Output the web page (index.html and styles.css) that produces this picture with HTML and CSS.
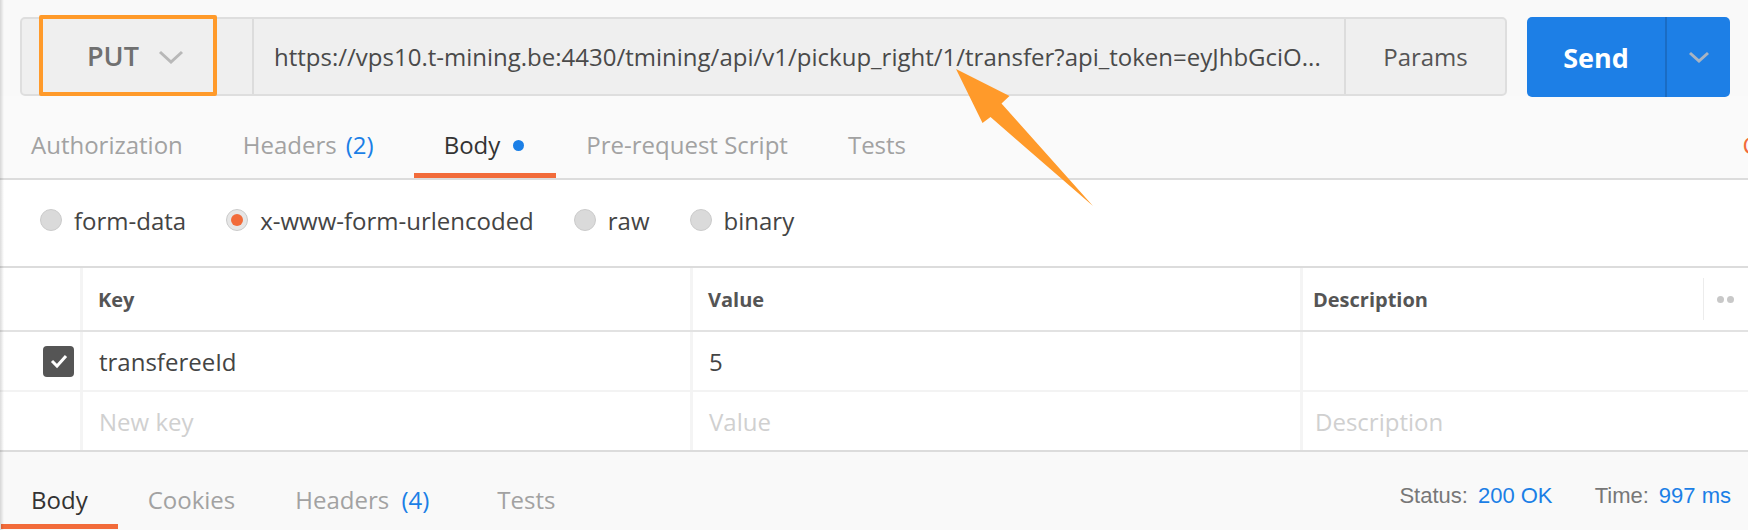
FILE: index.html
```html
<!DOCTYPE html>
<html>
<head>
<meta charset="utf-8">
<link rel="stylesheet" href="styles.css">
</head>
<body>
<div class="app">
  <div class="request-bar">
    <div class="url-group">
      <div class="method-cell">
        <div class="method-box">
          <span class="method-name">PUT</span>
          <svg class="chev" width="26" height="14" viewBox="0 0 26 14"><path d="M2 2 L13 12 L24 2" fill="none" stroke="#b8b8b8" stroke-width="3"/></svg>
        </div>
      </div>
      <div class="url-cell">https://vps10.t-mining.be:4430/tmining/api/v1/pickup_right/1/transfer?api_token=eyJhbGciO...</div>
      <div class="params-cell">Params</div>
    </div>
    <div class="send-group">
      <div class="send-btn">Send</div>
      <div class="send-drop">
        <svg width="22" height="12" viewBox="0 0 22 12"><path d="M2 2 L11 10 L20 2" fill="none" stroke="#a9b4c2" stroke-width="3"/></svg>
      </div>
    </div>
  </div>

  <div class="req-tabs">
    <div class="tab">Authorization</div>
    <div class="tab tab-headers">Headers <span class="count">(2)</span></div>
    <div class="tab active">Body <span class="dot"></span></div>
    <div class="tab">Pre-request Script</div>
    <div class="tab">Tests</div>
    <div class="tab-link">Cookies</div>
  </div>

  <div class="body-types">
    <div class="radio-item"><span class="radio"></span><span>form-data</span></div>
    <div class="radio-item"><span class="radio checked"></span><span>x-www-form-urlencoded</span></div>
    <div class="radio-item"><span class="radio"></span><span>raw</span></div>
    <div class="radio-item"><span class="radio"></span><span>binary</span></div>
  </div>

  <div class="kv">
    <div class="kv-row kv-head">
      <div class="cell c-check"></div>
      <div class="cell c-key">Key</div>
      <div class="cell c-val">Value</div>
      <div class="cell c-desc">
        <span class="desc-text">Description</span>
        <span class="more"><span class="mdot"></span><span class="mdot"></span></span>
      </div>
    </div>
    <div class="kv-row kv-item">
      <div class="cell c-check">
        <span class="checkbox">
          <svg width="20" height="16" viewBox="0 0 20 16"><path d="M3 8 L8 13 L17 3" fill="none" stroke="#fff" stroke-width="3"/></svg>
        </span>
      </div>
      <div class="cell c-key">transfereeId</div>
      <div class="cell c-val">5</div>
      <div class="cell c-desc"></div>
    </div>
    <div class="kv-row kv-new">
      <div class="cell c-check"></div>
      <div class="cell c-key placeholder">New key</div>
      <div class="cell c-val placeholder">Value</div>
      <div class="cell c-desc placeholder">Description</div>
    </div>
  </div>

  <div class="resp-bar">
    <div class="resp-tabs">
      <div class="rtab active">Body</div>
      <div class="rtab">Cookies</div>
      <div class="rtab rtab-headers">Headers <span class="count">(4)</span></div>
      <div class="rtab">Tests</div>
    </div>
    <div class="resp-meta">
      <span class="meta-label">Status:</span><span class="meta-val">200 OK</span>
      <span class="meta-label meta-gap">Time:</span><span class="meta-val">997 ms</span>
    </div>
  </div>

  <svg class="annot-arrow" width="1748" height="530" viewBox="0 0 1748 530">
    <polygon points="956,69 1009.5,96 1001.5,103.5 1093,206 990.5,117 982.5,123" fill="#ff9a2a"/>
  </svg>
  <div class="edge-shadow"></div>
</div>
</body>
</html>
```

FILE: styles.css
```css
* { box-sizing: border-box; }
html, body { margin: 0; padding: 0; }
body {
  width: 1748px;
  height: 530px;
  overflow: hidden;
  background: #f9f9f9;
  font-family: "Open Sans", "Noto Sans", sans-serif;
  color: #444;
}
.app {
  position: relative;
  width: 1748px;
  height: 530px;
  overflow: hidden;
  background: #f9f9f9;
}

/* Request bar */
.request-bar {
  display: flex;
  padding: 17px 18px 0 20px;
  height: 96px;
}
.url-group {
  flex: 1;
  display: flex;
  height: 79px;
  background: #efefef;
  border: 2px solid #dedede;
  border-radius: 5px;
}
.method-cell {
  width: 232px;
  border-right: 2px solid #dcdcdc;
  padding-left: 17px;
  display: flex;
  align-items: center;
}
.method-box {
  width: 178px;
  height: 81px;
  margin-top: -2px;
  border: 4px solid #ff9a2a;
  border-radius: 2px;
  display: flex;
  align-items: center;
  padding-left: 44px;
}
.method-name {
  font-size: 27px;
  font-weight: 600;
  color: #707070;
}
.chev { margin-left: 19px; margin-top: 2px; }
.url-cell {
  flex: 1;
  display: flex;
  align-items: center;
  padding-left: 20px;
  font-size: 24px;
  color: #4a4a4a;
  white-space: nowrap;
  overflow: hidden;
}
.params-cell {
  width: 161px;
  border-left: 2px solid #dcdcdc;
  display: flex;
  align-items: center;
  justify-content: center;
  font-size: 24px;
  color: #555;
}
.send-group {
  margin-left: 20px;
  width: 203px;
  height: 80px;
  display: flex;
  background: #1d7fe6;
  border-radius: 5px;
}
.send-btn {
  width: 140px;
  display: flex;
  align-items: center;
  justify-content: center;
  color: #fff;
  font-size: 27px;
  font-weight: 700;
  border-right: 2px solid #1a6cc4;
}
.send-drop {
  flex: 1;
  display: flex;
  align-items: center;
  justify-content: center;
}

/* Request tabs */
.req-tabs {
  display: flex;
  align-items: flex-end;
  height: 84px;
  padding-left: 1px;
  border-bottom: 2px solid #dcdcdc;
  background: #fafafa;
}
.tab {
  padding: 0 30px 14px;
  border-bottom: 5px solid transparent;
  font-size: 24px;
  line-height: 28px;
  color: #a2a2a2;
  white-space: nowrap;
  display: flex;
  align-items: center;
}
.tab-headers { margin-right: 10px; }
.tab-headers .count { margin-left: 9px; }
.tab.active {
  color: #333;
  border-bottom-color: #f26b3a;
}
.count { color: #1b7fe6; margin-left: 6px; }
.dot {
  width: 11px;
  height: 11px;
  border-radius: 50%;
  background: #1b7fe6;
  margin-left: 13px;
  margin-right: 2px;
}
.tab-link {
  margin-left: auto;
  margin-right: -82px;
  padding-bottom: 19px;
  font-size: 24px;
  line-height: 28px;
  color: #f26b3a;
  white-space: nowrap;
}

/* Body type radios */
.body-types {
  display: flex;
  align-items: center;
  gap: 40px;
  height: 88px;
  padding-left: 40px;
  padding-bottom: 6px;
  background: #fff;
  border-bottom: 2px solid #dcdcdc;
}
.radio-item {
  display: flex;
  align-items: center;
  gap: 12px;
  font-size: 24px;
  color: #444;
}
.radio {
  width: 22px;
  height: 22px;
  border-radius: 50%;
  background: #dadada;
  border: 1px solid #cbcbcb;
  display: flex;
  align-items: center;
  justify-content: center;
}
.radio.checked { background: #e6e6e6; }
.radio.checked::after {
  content: "";
  width: 12px;
  height: 12px;
  border-radius: 50%;
  background: #f26b3a;
}

/* Key/value table */
.kv { background: #fff; }
.kv-row {
  display: grid;
  grid-template-columns: 83px 610px 610px 1fr;
}
.kv-head { height: 64px; border-bottom: 2px solid #e2e2e2; }
.kv-item { height: 60px; border-bottom: 2px solid #f3f3f3; }
.kv-new { height: 60px; border-bottom: 2px solid #dcdcdc; }
.cell {
  display: flex;
  align-items: center;
  padding-left: 16px;
  font-size: 24px;
  color: #444;
  border-right: 3px solid #f4f4f4;
  white-space: nowrap;
}
.c-desc { border-right: none; padding-left: 12px; }
.kv-head .cell {
  font-size: 20px;
  font-weight: 700;
  color: #555;
  padding-left: 15px;
}
.kv-head .c-desc { padding-left: 10px; }
.c-check { padding-left: 0; justify-content: flex-end; padding-right: 6px; }
.kv-head .c-check { padding-left: 0; }
.placeholder { color: #d0d0d0; }
.checkbox {
  width: 31px;
  height: 31px;
  border-radius: 4px;
  background: #555;
  display: flex;
  align-items: center;
  justify-content: center;
}
.desc-text { flex: 1; }
.more {
  width: 45px;
  height: 42px;
  border-left: 1px solid #ececec;
  display: flex;
  align-items: center;
  gap: 3px;
  padding-left: 13px;
}
.mdot {
  width: 7px;
  height: 7px;
  border-radius: 50%;
  background: #c8c8c8;
}

/* Response bar */
.resp-bar {
  display: flex;
  align-items: flex-end;
  height: 77px;
  padding-left: 1px;
  background: #f9f9f9;
}
.resp-tabs { display: flex; }
.rtab {
  padding: 0 30px 10px;
  border-bottom: 5px solid transparent;
  font-size: 24px;
  line-height: 28px;
  color: #a2a2a2;
  white-space: nowrap;
}
.rtab-headers { margin-right: 8px; }
.rtab.active { color: #333; border-bottom-color: #f26b3a; }
.resp-meta {
  margin-left: auto;
  padding: 0 17px 19px 0;
  font-family: "Liberation Sans", Arial, sans-serif;
  font-size: 22px;
  line-height: 28px;
  white-space: nowrap;
}
.meta-label { color: #777; margin-right: 10px; }
.meta-val { color: #1b7fe6; }
.meta-gap { margin-left: 36px; }

/* Annotation overlays */
.annot-arrow {
  position: absolute;
  left: 0;
  top: 0;
  pointer-events: none;
}
.edge-shadow {
  position: absolute;
  left: 0;
  top: 0;
  bottom: 0;
  width: 4px;
  background: linear-gradient(to right, rgba(0,0,0,0.14), rgba(0,0,0,0));
}
```
